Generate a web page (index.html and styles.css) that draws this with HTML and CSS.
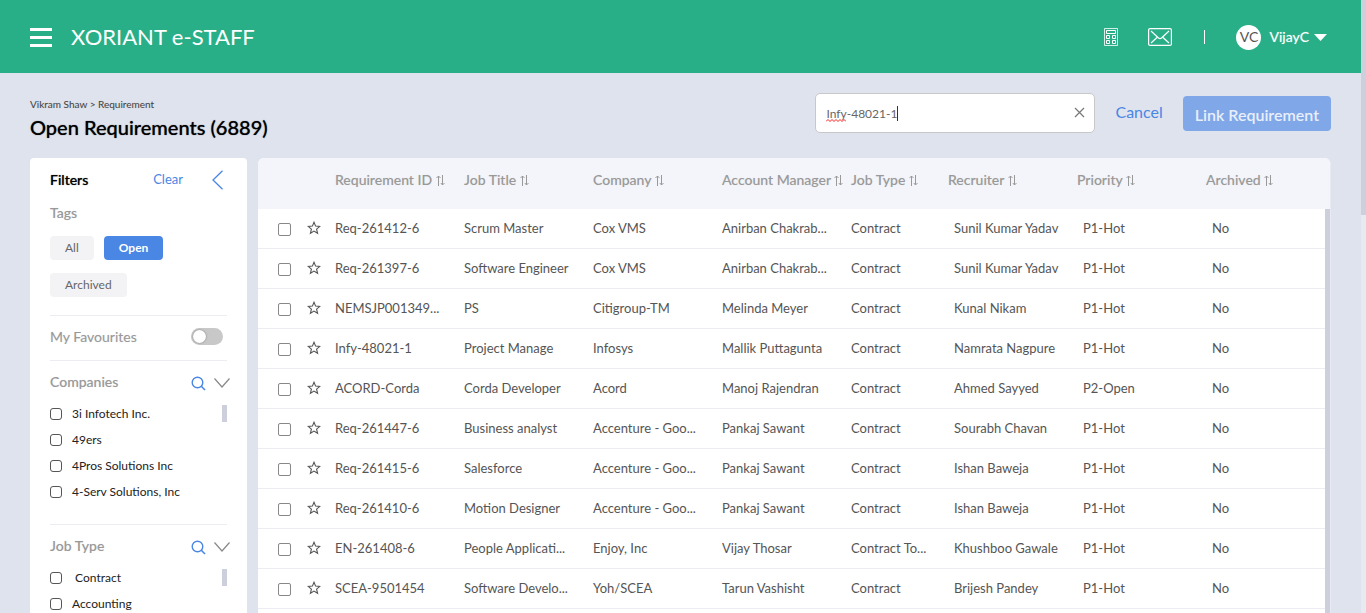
FILE: index.html
```html
<!DOCTYPE html>
<html lang="en">
<head>
<meta charset="utf-8">
<title>XORIANT e-STAFF - Open Requirements</title>
<link rel="stylesheet" href="styles.css">
</head>
<body>
<svg class="sprite" aria-hidden="true">
  <symbol id="sort" viewBox="0 0 9 11"><path d="M2.500 11V1M.5 3l2-2 2 2M6.500 0v10M4.800 8l1.700 2 2-2" fill="none" stroke="currentColor"/></symbol>
  <symbol id="star" viewBox="0 0 14 14"><path d="M7 1.200l1.600 3.900 4.200.3-3.200 2.700 1 4.200L7 10.100l-3.600 2.200 1-4.200-3.200-2.700 4.200-.3z" fill="none" stroke="currentColor" stroke-width="1.100"/></symbol>
  <symbol id="search" viewBox="0 0 15 15"><circle cx="6.500" cy="6.500" r="5.300" fill="none" stroke="currentColor" stroke-width="1.400"/><path d="M10.300 10.300l3.700 3.700" stroke="currentColor" stroke-width="1.600"/></symbol>
  <symbol id="down" viewBox="0 0 16 10"><path d="M.5.5L8 9 15.500.5" fill="none" stroke="currentColor" stroke-width="1.200"/></symbol>
</svg>
<div class="page">
  <header class="topbar">
    <button class="icon-button menu" aria-label="Menu"><svg width="22" height="19" viewBox="0 0 22 19"><path d="M0 0h22v3H0zM0 8h22v3H0zM0 16h22v3H0z" fill="#fff"/></svg></button>
    <span class="brand">XORIANT e-STAFF</span>
    <nav class="tools" aria-label="Tools">
      <button class="icon-button" aria-label="Calculator"><svg width="14" height="18" viewBox="0 0 14 18" fill="none" stroke="#fff"><path d="M.5.5h13v17H.5z" opacity=".8"/><path d="M2.500 2.500h9v3h-9zM2.500 7.500h3v3h-3zM8.500 7.500h3v3h-3zM2.500 12.500h3v3h-3zM8.500 12.500h3v3h-3z"/></svg></button>
      <button class="icon-button mail" aria-label="Messages"><svg width="24" height="18" viewBox="0 0 24 18" fill="none" stroke="#fff"><rect x=".6" y=".6" width="22.800" height="16.800" rx="1.500" stroke-width="1.200"/><path d="M3 3l7.500 7q1.500 1.200 3 0L21 3M3 15l6-5.500M21 15l-6-5.500" stroke-width="1.200"/></svg></button>
      <span class="divider"></span>
      <button class="icon-button user"><span class="avatar">VC</span><span class="user-name">VijayC</span><svg width="13" height="7" viewBox="0 0 13 7"><path d="M0 0h13L6.500 7z" fill="#fff"/></svg></button>
    </nav>
  </header>
  <main class="content">
    <div class="heading">
      <div class="titles">
        <div class="crumbs">Vikram Shaw &gt; Requirement</div>
        <h1>Open Requirements (6889)</h1>
      </div>
      <div class="search-box">
        <input type="text" aria-label="Search requirements" value="Infy-48021-1" spellcheck="false">
        <svg class="squiggle" width="20" height="3" viewBox="0 0 20 3"><path d="M0 2.500l2-2 2 2 2-2 2 2 2-2 2 2 2-2 2 2 2-2 2 2" fill="none" stroke="#f02020"/></svg>
        <span class="caret"></span>
        <button class="icon-button clear-search" aria-label="Clear search"><svg width="11" height="11" viewBox="0 0 11 11"><path d="M1 1l9 9M10 1l-9 9" stroke="#777" stroke-width="1.200"/></svg></button>
      </div>
      <a class="cancel" href="#">Cancel</a>
      <button class="link-button">Link Requirement</button>
    </div>
    <div class="columns">
      <aside class="filters">
        <div class="filters-head"><h2>Filters</h2><a href="#">Clear</a><button class="icon-button" aria-label="Collapse filters"><svg width="11" height="20" viewBox="0 0 11 20"><path d="M10.500.8L1 10l9.500 9.200" fill="none" stroke="#4a86e4" stroke-width="1.300"/></svg></button></div>
        <h3>Tags</h3>
        <div class="tags"><button>All</button><button class="active">Open</button><button>Archived</button></div>
        <div class="favourites"><label for="fav">My Favourites</label><input id="fav" class="switch" type="checkbox" role="switch"></div>
        <section class="group">
          <div class="group-head"><h3>Companies</h3><button class="icon-button find" aria-label="Search companies"><svg width="15" height="15"><use href="#search"/></svg></button><button class="icon-button fold" aria-label="Fold companies"><svg width="16" height="10"><use href="#down"/></svg></button></div>
          <div class="options">
            <label><input type="checkbox"><span>3i Infotech Inc.</span></label>
            <label><input type="checkbox"><span>49ers</span></label>
            <label><input type="checkbox"><span>4Pros Solutions Inc</span></label>
            <label><input type="checkbox"><span>4-Serv Solutions, Inc</span></label>
            <span class="thumb"></span>
          </div>
        </section>
        <section class="group">
          <div class="group-head"><h3>Job Type</h3><button class="icon-button find" aria-label="Search job types"><svg width="15" height="15"><use href="#search"/></svg></button><button class="icon-button fold" aria-label="Fold job types"><svg width="16" height="10"><use href="#down"/></svg></button></div>
          <div class="options">
            <label><input type="checkbox"><span>&nbsp;Contract</span></label>
            <label><input type="checkbox"><span>Accounting</span></label>
            <span class="thumb"></span>
          </div>
        </section>
      </aside>
      <div class="grid-card">
        <table>
          <colgroup><col class="c-check"><col class="c-star"><col class="c-wide"><col class="c-wide"><col class="c-wide"><col class="c-wide"><col class="c-type"><col class="c-wide"><col class="c-wide"><col class="c-last"></colgroup>
          <thead><tr><th></th><th></th>
            <th>Requirement ID <svg><use href="#sort"/></svg></th><th>Job Title <svg><use href="#sort"/></svg></th><th>Company <svg><use href="#sort"/></svg></th><th>Account Manager <svg><use href="#sort"/></svg></th><th>Job Type <svg><use href="#sort"/></svg></th><th>Recruiter <svg><use href="#sort"/></svg></th><th>Priority <svg><use href="#sort"/></svg></th><th>Archived <svg><use href="#sort"/></svg></th></tr></thead>
          <tbody>
            <tr><td><input type="checkbox" aria-label="Select Req-261412-6"></td><td><button class="icon-button" aria-label="Favourite"><svg><use href="#star"/></svg></button></td><td>Req-261412-6</td><td>Scrum Master</td><td>Cox VMS</td><td>Anirban Chakrab...</td><td>Contract</td><td>Sunil Kumar Yadav</td><td>P1-Hot</td><td>No</td></tr>
            <tr><td><input type="checkbox" aria-label="Select Req-261397-6"></td><td><button class="icon-button" aria-label="Favourite"><svg><use href="#star"/></svg></button></td><td>Req-261397-6</td><td>Software Engineer</td><td>Cox VMS</td><td>Anirban Chakrab...</td><td>Contract</td><td>Sunil Kumar Yadav</td><td>P1-Hot</td><td>No</td></tr>
            <tr><td><input type="checkbox" aria-label="Select NEMSJP001349"></td><td><button class="icon-button" aria-label="Favourite"><svg><use href="#star"/></svg></button></td><td>NEMSJP001349...</td><td>PS</td><td>Citigroup-TM</td><td>Melinda Meyer</td><td>Contract</td><td>Kunal Nikam</td><td>P1-Hot</td><td>No</td></tr>
            <tr><td><input type="checkbox" aria-label="Select Infy-48021-1"></td><td><button class="icon-button" aria-label="Favourite"><svg><use href="#star"/></svg></button></td><td>Infy-48021-1</td><td>Project Manage</td><td>Infosys</td><td>Mallik Puttagunta</td><td>Contract</td><td>Namrata Nagpure</td><td>P1-Hot</td><td>No</td></tr>
            <tr><td><input type="checkbox" aria-label="Select ACORD-Corda"></td><td><button class="icon-button" aria-label="Favourite"><svg><use href="#star"/></svg></button></td><td>ACORD-Corda</td><td>Corda Developer</td><td>Acord</td><td>Manoj Rajendran</td><td>Contract</td><td>Ahmed Sayyed</td><td>P2-Open</td><td>No</td></tr>
            <tr><td><input type="checkbox" aria-label="Select Req-261447-6"></td><td><button class="icon-button" aria-label="Favourite"><svg><use href="#star"/></svg></button></td><td>Req-261447-6</td><td>Business analyst</td><td>Accenture - Goo...</td><td>Pankaj Sawant</td><td>Contract</td><td>Sourabh Chavan</td><td>P1-Hot</td><td>No</td></tr>
            <tr><td><input type="checkbox" aria-label="Select Req-261415-6"></td><td><button class="icon-button" aria-label="Favourite"><svg><use href="#star"/></svg></button></td><td>Req-261415-6</td><td>Salesforce</td><td>Accenture - Goo...</td><td>Pankaj Sawant</td><td>Contract</td><td>Ishan Baweja</td><td>P1-Hot</td><td>No</td></tr>
            <tr><td><input type="checkbox" aria-label="Select Req-261410-6"></td><td><button class="icon-button" aria-label="Favourite"><svg><use href="#star"/></svg></button></td><td>Req-261410-6</td><td>Motion Designer</td><td>Accenture - Goo...</td><td>Pankaj Sawant</td><td>Contract</td><td>Ishan Baweja</td><td>P1-Hot</td><td>No</td></tr>
            <tr><td><input type="checkbox" aria-label="Select EN-261408-6"></td><td><button class="icon-button" aria-label="Favourite"><svg><use href="#star"/></svg></button></td><td>EN-261408-6</td><td>People Applicati...</td><td>Enjoy, Inc</td><td>Vijay Thosar</td><td>Contract To...</td><td>Khushboo Gawale</td><td>P1-Hot</td><td>No</td></tr>
            <tr><td><input type="checkbox" aria-label="Select SCEA-9501454"></td><td><button class="icon-button" aria-label="Favourite"><svg><use href="#star"/></svg></button></td><td>SCEA-9501454</td><td>Software Develo...</td><td>Yoh/SCEA</td><td>Tarun Vashisht</td><td>Contract</td><td>Brijesh Pandey</td><td>P1-Hot</td><td>No</td></tr>
          </tbody>
        </table>
        <span class="grid-scroll"></span>
      </div>
    </div>
  </main>
</div>
<div class="rail"><div class="rail-thumb"></div></div>
</body>
</html>
```
FILE: styles.css
```css
* { box-sizing: border-box; }
body { margin: 0; display: flex; height: 100vh; overflow: hidden; background: #dfe3ee; font-family: Lato, "Open Sans", sans-serif; font-size: 13px; color: #555; }
h1, h2, h3 { margin: 0; font-weight: 500; }
h1, h2 { text-shadow: 0 0 1px #555; }
h3, th, .favourites label { text-shadow: 0 0 1px #ddd; }
a { color: #4a86e4; text-decoration: none; }
button, input { font-family: inherit; }
button { cursor: pointer; }
svg { display: block; flex: none; }
.sprite { position: absolute; width: 0; height: 0; }
.icon-button { display: flex; align-items: center; border: 0; padding: 0; background: none; color: inherit; }
input[type="checkbox"] { appearance: none; flex: none; margin: 0; background: #fff; }

.page { flex: 1; min-width: 0; display: flex; flex-direction: column; }
.rail { width: 5px; background: #e8eaf2; }
.rail-thumb { height: 35%; background: #cdcfdd; }

.topbar { flex: none; display: flex; align-items: center; height: 73px; padding: 1px 34px 0 30px; background: #29af87; color: #fff; }
.brand { margin-left: 19px; padding-bottom: 2px; font-size: 22px; }
.tools { display: flex; align-items: center; margin-left: auto; }
.mail { margin-left: 30px; }
.divider { width: 1px; height: 14px; margin: 0 31px 0 32px; background: #fff; }
.avatar { width: 25px; height: 25px; border-radius: 50%; background: #fff; color: #555; font-size: 14px; line-height: 24px; text-align: center; }
.user-name { margin: 0 5px 2px 8px; font-size: 14px; text-shadow: 0 0 1px #94d7c3; }

.content { flex: 1; min-height: 0; display: flex; flex-direction: column; padding: 20px 30px 0; }
.heading { flex: none; display: flex; align-items: flex-start; height: 65px; }
.titles { flex: 1; padding-top: 5px; }
.crumbs { font-size: 10px; line-height: 12px; color: #444; text-shadow: 0 0 1px #ccc; }
h1 { margin-top: 5px; font-size: 20px; line-height: 24px; color: #000; }
.search-box { position: relative; width: 280px; }
.search-box input { display: block; width: 100%; height: 40px; border: 1px solid #c8c8c8; border-radius: 5px; padding: 0 30px 0 10px; background: #fff; color: #666; font-size: 12px; outline: 0; }
.squiggle { position: absolute; left: 11px; top: 26px; }
.caret { position: absolute; left: 82px; top: 13px; width: 1px; height: 15px; background: #333; }
.clear-search { position: absolute; right: 10px; top: 14px; }
.cancel { margin: 9px 20px 0; font-size: 16px; line-height: 20px; }
.link-button { height: 35px; margin-top: 3px; border: 0; border-radius: 4px; padding: 2px 12px 0; background: #80a7e8; color: #e9effb; font-size: 16px; font-weight: 600; }

.columns { flex: 1; min-height: 0; display: flex; gap: 11px; }
.filters { flex: none; width: 217px; overflow: hidden; padding: 0 20px; border-radius: 4px 4px 0 0; background: #fff; }
.filters-head { display: flex; align-items: center; height: 45px; }
.filters-head h2 { flex: 1; padding-bottom: 3px; font-size: 14px; color: #000; }
.filters-head a { margin-right: 29px; padding-bottom: 3px; }
.filters-head button { margin-right: 4px; padding-bottom: 1px; }
h3 { font-size: 14px; line-height: 20px; color: #999; }
.tags { display: flex; flex-wrap: wrap; gap: 13px 10px; padding: 13px 0 18px; border-bottom: 1px solid #ececf2; }
.tags button { height: 24px; border: 0; border-radius: 4px; padding: 0 15px 2px; background: #f3f3f6; color: #666; font-size: 12px; }
.tags .active { background: #4a86e4; color: #fff; font-weight: 700; }
.favourites { display: flex; justify-content: space-between; align-items: center; height: 45px; padding: 0 4px 4px 0; border-bottom: 1px solid #ececf2; font-size: 14px; color: #999; }
.favourites .switch { width: 32px; height: 17px; border-radius: 9px; padding: 2px; background: #c8c8c8; }
.switch::before { content: ""; display: block; width: 13px; height: 13px; border-radius: 50%; background: #fff; box-shadow: 0 0 2px #777; }
.group { padding: 11px 0 19px; border-bottom: 1px solid #ececf2; }
.group-head { display: flex; align-items: center; height: 20px; margin-right: -3px; }
.group-head h3 { flex: 1; }
.find { padding-top: 3px; color: #4a86e4; margin-right: 8px; }
.fold { padding-top: 2px; color: #888; }
.options { position: relative; display: grid; padding-top: 9px; }
.options label { display: flex; align-items: center; gap: 10px; height: 26px; font-size: 12px; color: #222; }
.options label span { padding-bottom: 2px; }
.options input[type="checkbox"] { width: 12px; height: 12px; border: 1px solid #555; border-radius: 3px; }
.thumb { position: absolute; right: 0; top: 13px; width: 5px; height: 17px; background: #cdcfdd; }

.grid-card { position: relative; flex: 1; min-width: 0; overflow: hidden; border-right: 1px solid #e8eaf2; border-radius: 6px 6px 0 0; background: #fff; }
table { width: 100%; table-layout: fixed; border-collapse: separate; border-spacing: 0; }
.c-check { width: 49px; }
.c-star { width: 28px; }
.c-wide { width: 129px; }
.c-type { width: 97px; }
.c-last { width: 124px; }
th, td { padding: 0; text-align: left; white-space: nowrap; }
th { height: 51px; padding-bottom: 8px; background: #f4f5fa; color: #999; font-size: 14px; font-weight: 500; }
th svg { display: inline-block; width: 9px; height: 11px; vertical-align: -1px; }
td { height: 40px; padding-bottom: 1px; border-bottom: 1px solid #ececf2; font-size: 13px; }
td input[type="checkbox"] { display: block; width: 13px; height: 13px; margin: 2px 0 0 20px; border: 1px solid #888; border-radius: 2px; }
td svg { width: 14px; height: 14px; }
td:nth-child(n+8) { padding-left: 6px; }
.grid-scroll { position: absolute; right: 0; top: 51px; bottom: 0; width: 5px; background: #cdcfdd; }
```
